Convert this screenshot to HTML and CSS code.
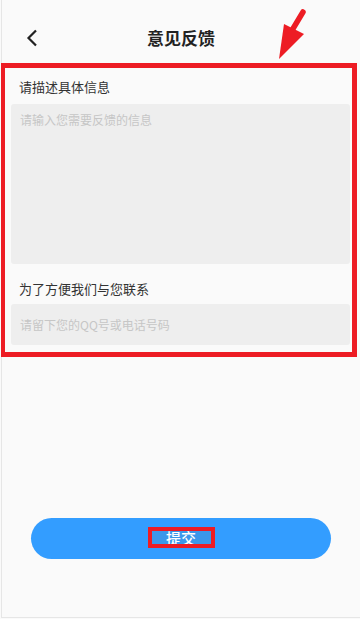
FILE: index.html
```html
<!DOCTYPE html>
<html lang="zh">
<head>
<meta charset="utf-8">
<link rel="stylesheet" href="styles.css">
</head>
<body>
<div class="screen">
  <header class="topbar">
    <svg class="back" width="12" height="18" viewBox="0 0 12 18"><path d="M10 1.5 L2.5 9 L10 16.5" fill="none" stroke="#222" stroke-width="2.2"/></svg>
    <h1 class="title">意见反馈</h1>
    <svg class="arrow" width="40" height="60" viewBox="0 0 40 60"><line x1="33" y1="12" x2="21" y2="32" stroke="#ed1c24" stroke-width="5.5" stroke-linecap="round"/><polygon points="9,59 14,24 34,34" fill="#ed1c24"/></svg>
  </header>
  <section class="form">
    <div class="label">请描述具体信息</div>
    <div class="area"><span class="ph">请输入您需要反馈的信息</span></div>
    <div class="label label2">为了方便我们与您联系</div>
    <div class="input"><span class="ph">请留下您的QQ号或电话号码</span></div>
  </section>
  <div class="btn"><span class="btn-text">提交</span></div>
</div>
</body>
</html>
```
FILE: styles.css
```css
html, body { margin: 0; padding: 0; }
body {
  background: #fafafa;
  font-family: "Noto Sans CJK SC", "Noto Sans", sans-serif;
  width: 360px;
  height: 619px;
  overflow: hidden;
}
.screen {
  width: 358px;
  height: 617px;
  border-left: 1px solid #e6e6e6;
  border-bottom: 1px solid #e6e6e6;
  margin-left: 1px;
  position: relative;
}
.topbar {
  height: 63px;
  position: relative;
  display: flex;
  justify-content: center;
  align-items: flex-start;
  box-sizing: border-box;
  padding-top: 26px;
}
.back { position: absolute; left: 24px; top: 29px; }
.title {
  margin: 0;
  font-size: 17px;
  font-weight: 700;
  line-height: 24px;
  color: #222;
}
.arrow { position: absolute; left: 268px; top: 0; }
.form {
  margin-left: -1px;
  width: 356px;
  box-sizing: border-box;
  border: 5px solid #ed1c24;
  border-left-width: 4px;
  padding: 9px 2px 7px 6px;
}
.label {
  font-size: 13px;
  line-height: 20px;
  color: #333;
  padding-left: 8px;
}
.area {
  margin-top: 7px;
  height: 160px;
  background: #eeeeee;
  border-radius: 3px;
  box-sizing: border-box;
  padding: 7px 9px;
  line-height: 18px;
  font-size: 12px;
}
.label2 { margin-top: 15px; }
.input {
  margin-top: 5px;
  height: 41px;
  background: #eeeeee;
  border-radius: 3px;
  box-sizing: border-box;
  padding: 0 9px;
  display: flex;
  align-items: center;
}
.ph {
  display: block;
  font-size: 12px;
  line-height: 18px;
  color: #c6c6c6;
}
.btn {
  margin: 161px 0 0 29px;
  width: 300px;
  height: 41px;
  border-radius: 21px;
  background: #339dff;
  display: flex;
  align-items: center;
  justify-content: center;
}
.btn-text {
  display: block;
  width: 59px;
  height: 13px;
  border: 4px solid #ed1c24;
  background: #3b97ea;
  color: #fff;
  font-size: 15px;
  font-weight: 500;
  line-height: 13px;
  text-align: center;
  overflow: hidden;
  margin-top: -2px;
}
```
